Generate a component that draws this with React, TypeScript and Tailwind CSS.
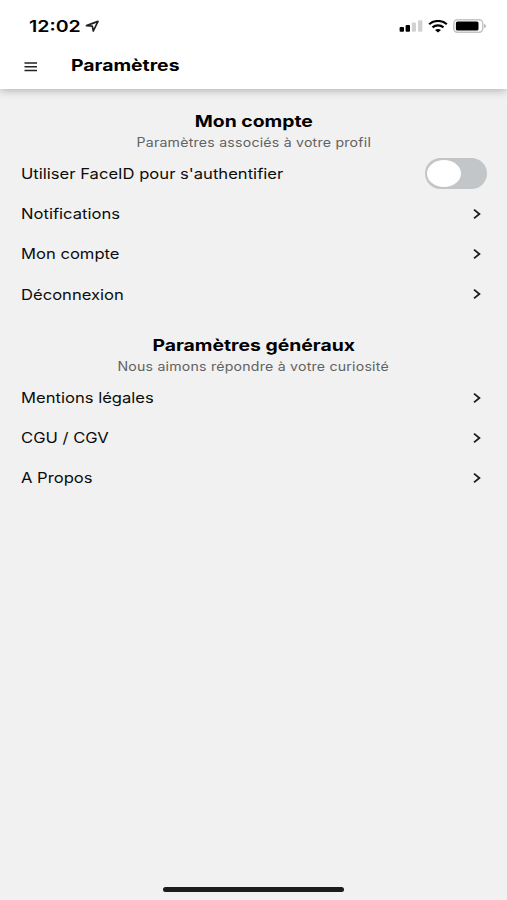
import React from "react";

interface SettingsRowProps {
  label: string;
  children?: React.ReactNode;
}

interface SectionTitleProps {
  title: string;
  description: string;
}

const Chevron: React.FC = () => (
  <svg width="10" height="12" viewBox="0 0 10 12" fill="none" className="mr-[5px]">
    <path d="M2 1.6 7.4 6 2 10.4" stroke="#1c1c1c" strokeWidth="1.8" />
  </svg>
);

const SettingsRow: React.FC<SettingsRowProps> = ({ label, children }) => {
  return (
    <li className="flex h-[40.2px] items-center justify-between pl-[20.5px] pr-5">
      <span className="origin-left scale-x-[1.145] whitespace-nowrap text-[14.5px] text-[#0c0c0c]">
        {label}
      </span>
      {children || <Chevron />}
    </li>
  );
};

const SectionTitle: React.FC<SectionTitleProps> = ({ title, description }) => {
  return (
    <div className="flex flex-col items-center">
      <h2 className="h-[22px] scale-x-[1.21] text-base leading-[22px] font-bold text-black">
        {title}
      </h2>
      <p className="h-[22px] scale-x-[1.13] text-[12.5px] leading-[22px] tracking-[0.2px] text-[#626262]">
        {description}
      </p>
    </div>
  );
};

const StatusBar: React.FC = () => {
  return (
    <div className="flex h-[52px] items-center justify-between pl-[29px] pr-5">
      <div className="flex items-center">
        <span className="w-[52px] origin-left scale-x-[1.22] text-base font-semibold">
          12:02
        </span>
        <svg width="15" height="13" viewBox="0 0 15 13" fill="none" className="ml-1">
          <path
            d="M1.5 5.6 13 1.4 8.3 11 7.3 6.2Z"
            stroke="#222"
            strokeWidth="1.7"
            strokeLinejoin="round"
          />
        </svg>
      </div>
      <div className="flex items-center">
        <svg width="24" height="12" viewBox="0 0 24 12">
          <rect x="0.6" y="7" width="4.4" height="4.7" rx="1" fill="#000" />
          <rect x="6.6" y="5" width="4.4" height="6.7" rx="1" fill="#000" />
          <rect x="12.8" y="2.5" width="4.2" height="9.2" rx="1" fill="#d2d2d2" />
          <rect x="19" y="0.2" width="4.4" height="11.5" rx="1" fill="#d2d2d2" />
        </svg>
        <svg width="20" height="13" viewBox="0 0 20 13" fill="none" className="ml-[5px]">
          <path d="M1.2 4.3C6-.1 14-.1 18.8 4.3" stroke="#000" strokeWidth="2.2" />
          <path d="M4.5 7.4c3.1-2.7 7.9-2.7 11 0" stroke="#000" strokeWidth="2.1" />
          <path d="M7 10c1.8-1.5 4.2-1.5 6 0l-3 2.6Z" fill="#000" />
        </svg>
        <svg width="34" height="14" viewBox="0 0 34 14" className="ml-[5px]">
          <rect x="0.8" y="0.8" width="28.9" height="12.4" rx="3.6" fill="#fff" stroke="#c4c4c4" strokeWidth="1.5" />
          <rect x="2.9" y="2.4" width="22.6" height="9.2" rx="1.6" fill="#000" />
          <path d="M31.2 4.9c2.2.7 2.2 3.5 0 4.2Z" fill="#aaa" />
        </svg>
      </div>
    </div>
  );
};

const App: React.FC = () => {
  return (
    <div className="flex h-[900px] w-[507px] flex-col bg-[#f1f1f1] font-['Inter',sans-serif] text-black">
      <header className="h-[89px] bg-white shadow-[0_1px_9px_rgba(0,0,0,0.3)]">
        <StatusBar />
        <div className="flex h-[26px] items-center pl-6">
          <svg width="14" height="10" viewBox="0 0 14 10" className="mt-[3px]">
            <path d="M.5 1h12.5M.5 4.8h12.5M.5 8.6h12.5" stroke="#222" strokeWidth="1.5" />
          </svg>
          <h1 className="ml-[33px] origin-left scale-x-[1.21] text-base font-bold">
            Paramètres
          </h1>
        </div>
      </header>

      <main className="flex-1 pt-[20.8px]">
        <SectionTitle title="Mon compte" description="Paramètres associés à votre profil" />
        <ul>
          <SettingsRow label="Utiliser FaceID pour s'authentifier">
            <button
              role="switch"
              aria-checked="false"
              aria-label="FaceID"
              className="flex h-[31px] w-[62px] items-center rounded-full bg-[#c3c6c8] pl-[2px]"
            >
              <span className="h-[27px] w-[34px] rounded-[50%] bg-white" />
            </button>
          </SettingsRow>
          <SettingsRow label="Notifications" />
          <SettingsRow label="Mon compte" />
          <SettingsRow label="Déconnexion" />
        </ul>

        <div className="mt-[19px]">
          <SectionTitle title="Paramètres généraux" description="Nous aimons répondre à votre curiosité" />
          <ul>
            <SettingsRow label="Mentions légales" />
            <SettingsRow label="CGU / CGV" />
            <SettingsRow label="A Propos" />
          </ul>
        </div>
      </main>

      <div className="mx-auto mb-2 h-[5px] w-[181px] rounded-full bg-[#1c1c1e]" />
    </div>
  );
};

export default App;
